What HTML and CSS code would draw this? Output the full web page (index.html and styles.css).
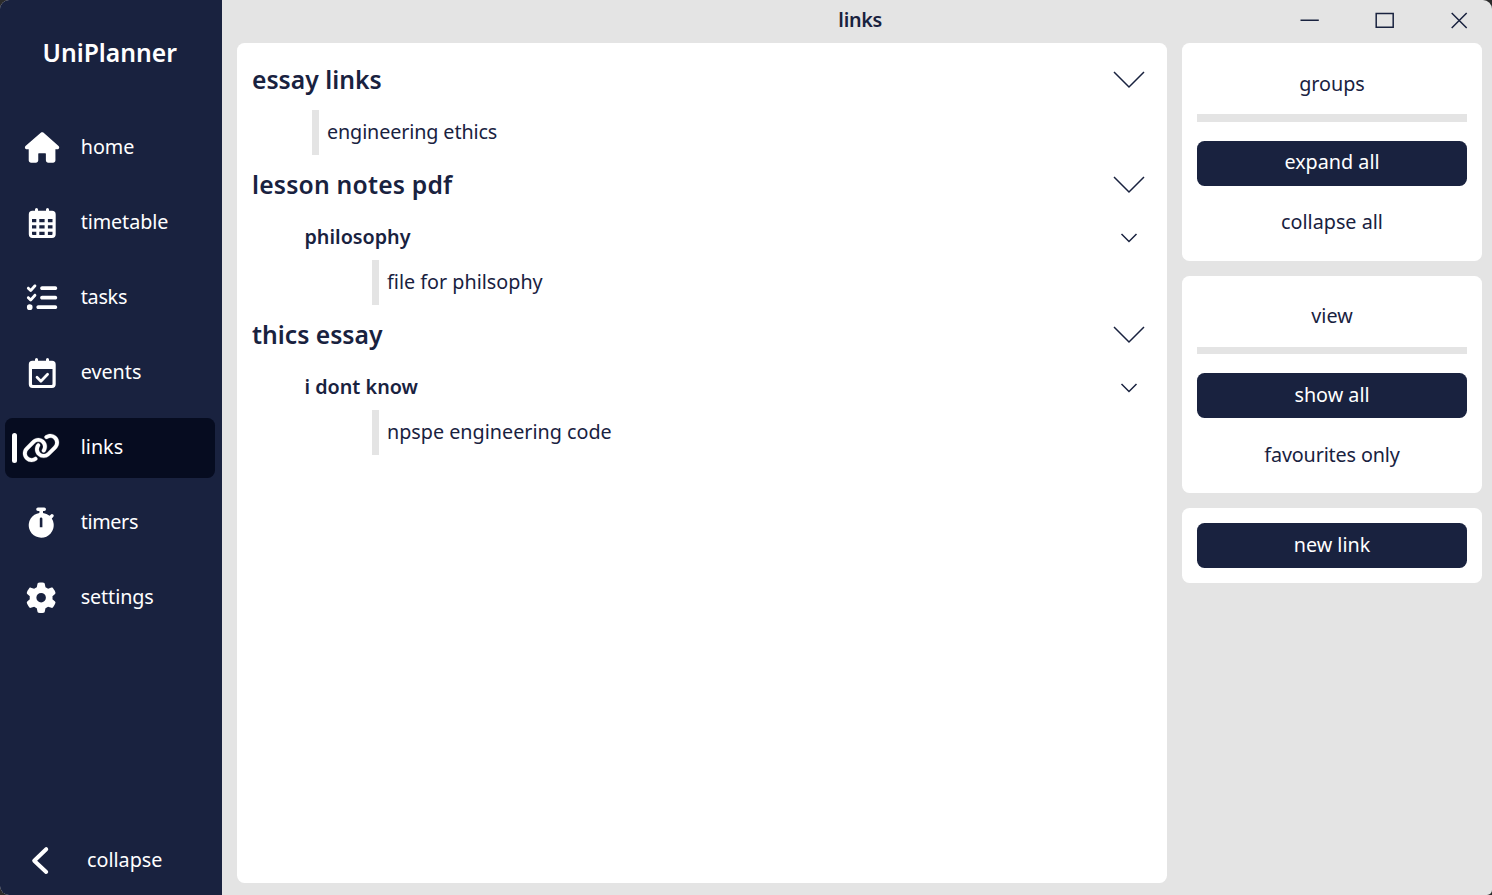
FILE: index.html
```html
<!DOCTYPE html>
<html lang="en">
<head>
<meta charset="utf-8">
<title>UniPlanner</title>
<link rel="stylesheet" href="styles.css">
</head>
<body>
<div class="window">
  <aside class="sidebar">
    <h1 class="brand">UniPlanner</h1>
    <nav class="nav">
      <a class="nav-item">
        <svg class="icon" viewBox="0 0 45 60"><g transform="translate(4.9 14.2) scale(.0596)"><path d="M575.8 255.5c0 18-15 32.1-32 32.1h-32l.7 160.2V472c0 22.1-17.9 40-40 40H392c-22.1 0-40-17.9-40-40V362c0-7-4-10-10-10H234c-6 0-10 3-10 10v110c0 22.1-17.9 40-40 40H104c-22.1 0-40-17.9-40-40V287.6H32c-18 0-32-14-32-32.1c0-9 3-17 10-24L266.4 8c7-7 15-8 22-8s15 2 21 7L564.8 231.5c8 7 12 15 11 24z"/></g></svg>
        <span class="nav-text">home</span>
      </a>
      <a class="nav-item">
        <svg class="icon" viewBox="0 0 45 60"><path fill-rule="evenodd" d="M12.500 17.800H15V16.400a1.500 1.500 0 0 1 3 0v1.400H26V16.400a1.500 1.500 0 0 1 3 0v1.400H32a3.700 3.700 0 0 1 3.700 3.700V41.300A3.700 3.700 0 0 1 32 45H12.500a3.700 3.700 0 0 1-3.700-3.700V21.500a3.700 3.700 0 0 1 3.700-3.700zM12 26v3.300h4.300v-3.300zM19.300 26v3.300h5.300v-3.300zM27.900 26v3.300h4.600v-3.300zM12 32.300v3.100h4.300v-3.100zM19.300 32.300v3.100h5.300v-3.100zM27.900 32.300v3.100h4.600v-3.100zM12 38.700v2.400q0 .9.900.9h3.400v-3.300zM19.300 38.700V42h5.300v-3.300zM27.900 38.700V42h3.700q.9 0 .9-.9v-2.400z"/></svg>
        <span class="nav-text t-timetable">timetable</span>
      </a>
      <a class="nav-item">
        <svg class="icon" viewBox="0 0 45 60"><g transform="translate(6.900 14.500) scale(.0592)"><path d="M152.100 38.200c9.900 8.900 10.700 24 1.800 33.900l-72 80c-4.400 4.900-10.600 7.800-17.200 7.900s-12.900-2.400-17.600-7L7 113C-2.300 103.600-2.300 88.400 7 79s24.600-9.400 33.900 0l22.100 22.100 55.100-61.200c8.900-9.900 24-10.700 33.900-1.800zm0 160c9.900 8.900 10.700 24 1.800 33.900l-72 80c-4.400 4.900-10.600 7.800-17.200 7.900s-12.900-2.400-17.600-7L7 273c-9.400-9.400-9.400-24.600 0-33.900s24.600-9.400 33.900 0l22.100 22.100 55.100-61.200c8.900-9.900 24-10.700 33.900-1.800zM224 96c0-17.700 14.300-32 32-32H480c17.700 0 32 14.300 32 32s-14.300 32-32 32H256c-17.700 0-32-14.300-32-32zm0 160c0-17.700 14.300-32 32-32H480c17.700 0 32 14.300 32 32s-14.300 32-32 32H256c-17.700 0-32-14.300-32-32zM160 416c0-17.700 14.300-32 32-32H480c17.700 0 32 14.300 32 32s-14.300 32-32 32H192c-17.700 0-32-14.300-32-32zM48 368a48 48 0 1 1 0 96 48 48 0 1 1 0-96z"/></g></svg>
        <span class="nav-text t-tasks">tasks</span>
      </a>
      <a class="nav-item">
        <svg class="icon" viewBox="0 0 45 60"><path fill-rule="evenodd" d="M12.500 17.800H15V16.400a1.500 1.500 0 0 1 3 0v1.400H26V16.400a1.500 1.500 0 0 1 3 0v1.400H32a3.700 3.700 0 0 1 3.700 3.700V41.300A3.700 3.700 0 0 1 32 45H12.500a3.700 3.700 0 0 1-3.700-3.700V21.500a3.700 3.700 0 0 1 3.700-3.700zM12 26v15.100q0 .9.900.9h18.700q.9 0 .9-.9V26z"/><path class="stroke" stroke-width="2.700" d="M17 34.300l3.900 3.900 6.700-7"/></svg>
        <span class="nav-text">events</span>
      </a>
      <a class="nav-item active">
        <svg class="icon" viewBox="0 0 45 60"><g transform="translate(1.900 14.700) scale(.0596)"><path class="heavy" d="M579.800 267.700c56.500-56.500 56.500-148 0-204.500c-50-50-128.800-56.500-186.300-15.400l-1.600 1.100c-14.400 10.300-17.700 30.300-7.400 44.600s30.300 17.700 44.600 7.400l1.600-1.100c32.100-22.900 76-19.300 103.800 8.600c31.500 31.500 31.500 82.500 0 114L422.300 334.800c-31.500 31.500-82.500 31.500-114 0c-27.900-27.900-31.500-71.800-8.600-103.800l1.100-1.600c10.300-14.400 6.900-34.400-7.400-44.600s-34.400-6.900-44.600 7.400l-1.100 1.600C206.500 251.200 213 330 263 380c56.500 56.500 148 56.500 204.500 0L579.800 267.700zM60.200 244.300c-56.500 56.500-56.500 148 0 204.500c50 50 128.800 56.500 186.300 15.400l1.600-1.100c14.400-10.300 17.700-30.300 7.400-44.600s-30.300-17.700-44.600-7.400l-1.600 1.100c-32.100 22.900-76 19.300-103.800-8.600C74 372 74 321 105.500 289.500L217.700 177.200c31.500-31.500 82.500-31.500 114 0c27.900 27.900 31.500 71.800 8.600 103.900l-1.100 1.600c-10.300 14.400-6.900 34.400 7.400 44.600s34.400 6.900 44.600-7.400l1.100-1.600C433.500 260.800 427 182 377 132c-56.500-56.500-148-56.500-204.500 0L60.200 244.300z"/></g></svg>
        <span class="nav-text">links</span>
      </a>
      <a class="nav-item">
        <svg class="icon" viewBox="0 0 45 60"><path fill-rule="evenodd" d="M18 14.500h6.200a1.800 1.800 0 0 1 0 3.600H23v1.800q3.700.6 6.600 2.900l1.100-1.100a1.600 1.600 0 0 1 2.500 2.300l-1.400 1.600A12.500 12.500 0 1 1 19.400 19.900V18.100H18a1.800 1.800 0 0 1 0-3.600zM21.100 24.400a1.300 1.300 0 0 0-1.300 1.300v8.500h2.600v-8.500a1.300 1.300 0 0 0-1.300-1.300z"/></svg>
        <span class="nav-text t-timers">timers</span>
      </a>
      <a class="nav-item">
        <svg class="icon" viewBox="0 0 45 60"><g transform="translate(5.900 14.500) scale(.0595)"><path d="M495.900 166.600c3.200 8.700 .5 18.400-6.400 24.600l-43.300 39.400c1.100 8.300 1.700 16.800 1.700 25.400s-.6 17.100-1.700 25.400l43.300 39.400c6.900 6.200 9.600 15.900 6.400 24.600c-4.400 11.900-9.700 23.300-15.800 34.300l-4.700 8.100c-6.600 11-14 21.400-22.100 31.200c-5.900 7.200-15.700 9.600-24.500 6.800l-55.700-17.700c-13.400 10.300-28.200 18.900-44 25.400l-12.500 57.100c-2 9.100-9 16.300-18.200 17.800c-13.800 2.300-28 3.500-42.500 3.500s-28.700-1.200-42.500-3.500c-9.200-1.500-16.200-8.700-18.200-17.800l-12.500-57.100c-15.800-6.500-30.600-15.100-44-25.400L83.100 425.900c-8.800 2.800-18.600 .3-24.500-6.800c-8.100-9.800-15.500-20.200-22.100-31.200l-4.700-8.100c-6.100-11-11.400-22.400-15.800-34.300c-3.200-8.700-.5-18.400 6.400-24.600l43.300-39.400C64.600 273.100 64 264.600 64 256s.6-17.100 1.700-25.400L22.400 191.200c-6.900-6.200-9.600-15.900-6.400-24.600c4.400-11.900 9.700-23.300 15.800-34.300l4.700-8.100c6.600-11 14-21.400 22.100-31.200c5.900-7.200 15.700-9.600 24.500-6.800l55.700 17.700c13.400-10.300 28.200-18.900 44-25.400l12.500-57.100c2-9.100 9-16.300 18.200-17.800C227.300 1.200 241.500 0 256 0s28.700 1.200 42.500 3.500c9.200 1.500 16.200 8.700 18.200 17.800l12.500 57.100c15.800 6.500 30.600 15.100 44 25.400l55.700-17.700c8.800-2.800 18.600-.3 24.500 6.800c8.100 9.800 15.500 20.200 22.100 31.200l4.700 8.100c6.100 11 11.400 22.400 15.800 34.300zM256 336a80 80 0 1 0 0-160 80 80 0 1 0 0 160z"/></g></svg>
        <span class="nav-text t-settings">settings</span>
      </a>
    </nav>
    <a class="collapse">
      <svg class="icon" viewBox="0 0 45 60"><path class="stroke" stroke-width="4" d="M26.200 19.200L14.200 30.700 26.200 42"/></svg>
      <span class="nav-text">collapse</span>
    </a>
  </aside>

  <div class="content">
    <header class="titlebar">
      <span class="title">links</span>
      <svg class="controls" viewBox="0 0 180 40"><path d="M8.500 20.300h18.300M84.200 13.600h17v13.600h-17zM159.700 13l15 15M174.700 13l-15 15"/></svg>
    </header>
    <div class="columns">
      <main class="panel">
        <div class="row group"><h2>essay links</h2><svg class="chevron" viewBox="0 0 32 18"><path d="M1 1l15 15L31 1"/></svg></div>
        <div class="row link"><span class="t-ethics">engineering ethics</span></div>
        <div class="row group"><h2 class="t-lesson">lesson notes pdf</h2><svg class="chevron" viewBox="0 0 32 18"><path d="M1 1l15 15L31 1"/></svg></div>
        <div class="row subgroup"><h3>philosophy</h3><svg class="chevron small" viewBox="0 0 18 10"><path d="M1.500 1l7.500 7.500L16.500 1"/></svg></div>
        <div class="row link nested"><span>file for philsophy</span></div>
        <div class="row group"><h2>thics essay</h2><svg class="chevron" viewBox="0 0 32 18"><path d="M1 1l15 15L31 1"/></svg></div>
        <div class="row subgroup"><h3>i dont know</h3><svg class="chevron small" viewBox="0 0 18 10"><path d="M1.500 1l7.500 7.500L16.500 1"/></svg></div>
        <div class="row link nested"><span>npspe engineering code</span></div>
      </main>
      <section class="side">
        <div class="card">
          <div class="card-title">groups</div>
          <div class="divider"></div>
          <div class="button primary">expand all</div>
          <div class="button">collapse all</div>
        </div>
        <div class="card">
          <div class="card-title">view</div>
          <div class="divider"></div>
          <div class="button primary">show all</div>
          <div class="button t-fav">favourites only</div>
        </div>
        <div class="card">
          <div class="button primary">new link</div>
        </div>
      </section>
    </div>
  </div>
</div>
</body>
</html>
```
FILE: styles.css
```css
* { box-sizing: border-box; }

body {
  margin: 0;
  background: #2b2b2b;
  color: #19223f;
  font: 400 19.75px/30px "Noto Sans", "Open Sans", sans-serif;
}

h1, h2, h3 { margin: 0; font-weight: 600; }

.window {
  display: flex;
  width: 1492px;
  height: 895px;
  overflow: hidden;
  border-radius: 9px 9px 5px 9px;
  background: #e4e4e4;
}

/* Sidebar */
.sidebar {
  display: flex;
  flex-direction: column;
  width: 222px;
  background: #19223f;
  color: #fff;
}

.brand {
  height: 118px;
  padding: 35px 0 0 42.5px;
  font-size: 24.7px;
  line-height: 36px;
}

.nav {
  display: flex;
  flex-direction: column;
  gap: 15px;
  padding-left: 4.5px;
}

.nav-item, .collapse {
  display: flex;
  align-items: center;
  width: 210px;
  height: 60px;
  padding-left: 15.5px;
  border-radius: 7.5px;
}

.nav-item.active {
  padding-left: 7px;
  background: #060c20;
}

.nav-item.active::before {
  content: "";
  width: 5px;
  height: 30px;
  margin-right: 3.5px;
  border-radius: 2.5px;
  background: #fff;
}

.icon {
  flex: none;
  width: 45px;
  height: 60px;
  fill: #fff;
}

.icon .stroke {
  fill: none;
  stroke: #fff;
  stroke-linecap: round;
  stroke-linejoin: round;
}

.icon .heavy { stroke: #fff; stroke-width: 4; }

.nav-text { padding: 0 0 3px 15.7px; }

.collapse {
  margin: auto 0 5px 4.5px;
}

.collapse .nav-text { padding-left: 22px; padding-bottom: 0; }

/* Main area */
.content { flex: 1; padding: 0 10px 0 15px; }

.titlebar {
  display: flex;
  justify-content: flex-end;
  align-items: center;
  gap: 410px;
  height: 43px;
}

.title { padding-bottom: 3px; font-weight: 600; letter-spacing: -.3px; }

.controls {
  width: 180px;
  height: 40px;
  margin: 0 10px 3px 0;
  fill: none;
  stroke: #19223f;
  stroke-width: 1.5;
}

.columns { display: flex; gap: 15px; }

.panel {
  width: 930px;
  height: 840px;
  padding-top: 7.4px;
  border-radius: 7.5px;
  background: #fff;
}

.row {
  display: flex;
  align-items: center;
  justify-content: space-between;
  height: 45px;
}

.group { height: 60px; padding: 0 22px 0 15px; }
.group h2 { padding-bottom: 1px; font-size: 24.7px; line-height: 36px; }

.subgroup { padding: 0 29px 0 67.5px; }
.subgroup h3 { padding-bottom: 2px; font-size: 19.75px; }

.link {
  margin-left: 75px;
  padding: 0 0 2px 8px;
  border-left: 7.5px solid #e4e4e4;
}

.link.nested { margin-left: 135px; }

.chevron {
  width: 32px;
  height: 18px;
  fill: none;
  stroke: #19223f;
  stroke-width: 1.5;
}

.chevron.small { width: 18px; height: 10px; }

/* Side cards */
.side {
  display: flex;
  flex-direction: column;
  gap: 15px;
  width: 300px;
}

.card {
  display: flex;
  flex-direction: column;
  gap: 15px;
  padding: 15px;
  border-radius: 7.5px;
  background: #fff;
}

.card-title {
  height: 41px;
  padding-top: 10.7px;
  text-align: center;
}

.divider { height: 7.5px; margin-bottom: 4px; background: #e4e4e4; }

.button {
  height: 45px;
  padding-top: 6.5px;
  border-radius: 7.5px;
  text-align: center;
}

.button.primary { background: #19223f; color: #fff; }

/* Letter fitting */
.t-timetable { letter-spacing: -.1px; }
.t-tasks { letter-spacing: -.25px; }
.t-timers { letter-spacing: -.35px; }
.t-settings { letter-spacing: -.1px; }
.t-ethics { letter-spacing: -.12px; }
.t-lesson { letter-spacing: .2px; }
.t-fav { letter-spacing: -.15px; }
```
